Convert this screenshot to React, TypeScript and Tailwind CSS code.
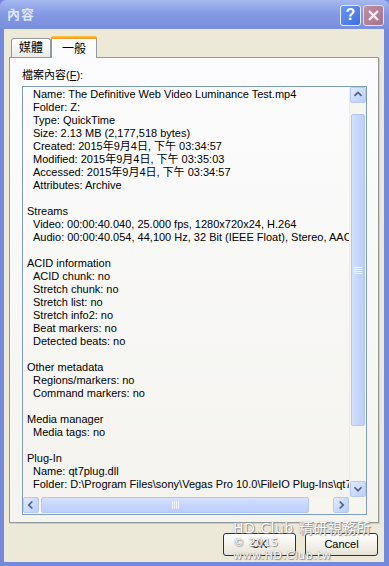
const FONT = "font-['Liberation_Sans','Noto_Sans_CJK_TC',sans-serif]";

const lines: [number, string][] = [
  [1, "Name: The Definitive Web Video Luminance Test.mp4"],
  [1, "Folder: Z:"],
  [1, "Type: QuickTime"],
  [1, "Size: 2.13 MB (2,177,518 bytes)"],
  [1, "Created: 2015年9月4日, 下午 03:34:57"],
  [1, "Modified: 2015年9月4日, 下午 03:35:03"],
  [1, "Accessed: 2015年9月4日, 下午 03:34:57"],
  [1, "Attributes: Archive"],
  [0, ""],
  [0, "Streams"],
  [1, "Video: 00:00:40.040, 25.000 fps, 1280x720x24, H.264"],
  [1, "Audio: 00:00:40.054, 44,100 Hz, 32 Bit (IEEE Float), Stereo, AAC"],
  [0, ""],
  [0, "ACID information"],
  [1, "ACID chunk: no"],
  [1, "Stretch chunk: no"],
  [1, "Stretch list: no"],
  [1, "Stretch info2: no"],
  [1, "Beat markers: no"],
  [1, "Detected beats: no"],
  [0, ""],
  [0, "Other metadata"],
  [1, "Regions/markers: no"],
  [1, "Command markers: no"],
  [0, ""],
  [0, "Media manager"],
  [1, "Media tags: no"],
  [0, ""],
  [0, "Plug-In"],
  [1, "Name: qt7plug.dll"],
  [1, "Folder: D:\\Program Files\\sony\\Vegas Pro 10.0\\FileIO Plug-Ins\\qt7plug"],
];

function ArrowBtn({ dir }: { dir: "up" | "down" | "left" | "right" }) {
  const d = {
    up: "M4 9 L8 5 L12 9",
    down: "M4 6 L8 10 L12 6",
    left: "M9.5 4 L5.5 8 L9.5 12",
    right: "M6.5 4 L10.5 8 L6.5 12",
  }[dir];
  return (
    <div className="w-[16px] h-[16px] rounded-[2px] border border-[#b6c8f4] bg-gradient-to-br from-[#e2ebfe] to-[#b8cdf8] flex items-center justify-center">
      <svg width="16" height="16" viewBox="0 0 16 16">
        <path d={d} fill="none" stroke="#4d6185" strokeWidth="2" />
      </svg>
    </div>
  );
}

function XPButton({ label }: { label: string }) {
  return (
    <div className="w-[73px] h-[23px] rounded-[3px] border border-[#003c74] bg-gradient-to-b from-[#ffffff] to-[#e6e3d6] flex items-center justify-center text-[11px] text-black">
      {label}
    </div>
  );
}

export default function App() {
  return (
    <div className={`w-[389px] h-[566px] flex flex-col bg-[#7488dc] ${FONT} overflow-hidden`}>
      {/* title bar */}
      <div className="h-[29px] flex items-center justify-between pl-[7px] pr-[5px] bg-gradient-to-b from-[#a6b8f0] via-[#8399e2] to-[#7a8fdd] rounded-t-[6px]">
        <span className="text-[13px] font-bold text-[#dde5f8] tracking-[1px]">內容</span>
        <div className="flex gap-[2px] pt-[1px]">
          <div className="w-[21px] h-[21px] rounded-[3px] border border-[#e6ecfb] bg-gradient-to-br from-[#6b97f0] to-[#3f6fdd] flex items-center justify-center text-white text-[16px] font-bold leading-none">
            ?
          </div>
          <div className="w-[21px] h-[21px] rounded-[3px] border border-[#ecdbe2] bg-gradient-to-br from-[#c08ea4] to-[#a6758b] flex items-center justify-center">
            <svg width="13" height="13" viewBox="0 0 13 13">
              <path d="M2 2 L11 11 M11 2 L2 11" stroke="#f4eef1" strokeWidth="2.4" />
            </svg>
          </div>
        </div>
      </div>

      {/* body */}
      <div className="flex-1 ml-[4px] mr-[5px] mb-[4px] bg-[#ece9d8] flex flex-col relative">
        <div className="pl-[5px] pr-[5px] pt-[7px]">
          <div className="flex items-end h-[21px] pl-[2px]">
            <div className="w-[40px] h-[19px] border border-b-0 border-[#919b9c] rounded-t-[3px] bg-gradient-to-b from-[#ffffff] to-[#ecebe5] flex items-center justify-center text-[12px] text-black">
              媒體
            </div>
            <div className="relative z-10 -mb-px w-[46px] h-[22px] border-x border-[#919b9c] rounded-t-[3px] bg-[#fcfcfe] flex flex-col">
              <div className="h-[3px] -mx-px rounded-t-[3px] bg-gradient-to-b from-[#ffc83c] to-[#e6952c]" />
              <div className="flex-1 flex items-center justify-center text-[12px] text-black">一般</div>
            </div>
          </div>
          <div className="h-[466px] border border-[#919b9c] bg-gradient-to-b from-[#fcfcfe] to-[#f4f3ee] px-[12px] pt-[10px] shadow-[1px_1px_0_#d0cec0]">
            <div className="text-[11px] leading-[14px] text-black mb-[4px]">
              檔案內容(<span className="underline">F</span>):
            </div>
            <div className="w-[345px] h-[429px] border border-[#7f9db9] flex flex-col">
              <div className="flex flex-1 min-h-0">
                <div className="flex-1 overflow-hidden pt-[1px] pl-[4px] text-[11px] leading-[13px] text-black whitespace-nowrap">
                  {lines.map(([ind, t], i) => (
                    <div key={i} className={`h-[13px] ${ind ? "pl-[6px]" : ""}`}>
                      {t}
                    </div>
                  ))}
                </div>
                {/* vertical scrollbar */}
                <div className="w-[17px] flex flex-col bg-[#f6f5f0] border-l border-[#eeede5]">
                  <ArrowBtn dir="up" />
                  <div className="flex-1 relative pt-[11px] pb-[55px]">
                    <div className="h-full mx-[1px] rounded-[2px] border border-[#b0c6f5] bg-gradient-to-r from-[#d6e2fd] via-[#c5d6fc] to-[#bccffb] flex items-center justify-center">
                      <svg width="8" height="8" viewBox="0 0 8 8">
                        <path d="M0 1.5H8M0 3.5H8M0 5.5H8M0 7.5H8" stroke="#eef3fe" strokeWidth="1" />
                      </svg>
                    </div>
                  </div>
                  <ArrowBtn dir="down" />
                </div>
              </div>
              {/* horizontal scrollbar */}
              <div className="h-[17px] flex bg-[#f6f5f0]">
                <ArrowBtn dir="left" />
                <div className="w-[268px] h-[16px] ml-[2px] rounded-[2px] border border-[#b0c6f5] bg-gradient-to-b from-[#d6e2fd] via-[#c5d6fc] to-[#bccffb] flex items-center justify-center">
                  <svg width="8" height="8" viewBox="0 0 8 8">
                    <path d="M1.5 0V8M3.5 0V8M5.5 0V8M7.5 0V8" stroke="#eef3fe" strokeWidth="1" />
                  </svg>
                </div>
                <div className="flex-1" />
                <ArrowBtn dir="right" />
                <div className="w-[17px]" />
              </div>
            </div>
          </div>
        </div>
        <div className="flex justify-end gap-[9px] pr-[6px] pt-[10px]">
          <XPButton label="OK" />
          <XPButton label="Cancel" />
        </div>

        {/* watermark */}
        <div className="absolute left-[229px] top-[492px] text-white font-['DejaVu_Sans','Noto_Sans_CJK_TC',sans-serif] [text-shadow:0_0_1px_#777,1px_1px_1px_#888] pointer-events-none">
          <div className="text-[14px] leading-[15px] tracking-[0.5px]">HD.Club 精研視務所</div>
          <div className="text-[11px] leading-[13px] tracking-[0.5px]">© 2015&nbsp; www.HD.Club.tw</div>
        </div>
      </div>
    </div>
  );
}
